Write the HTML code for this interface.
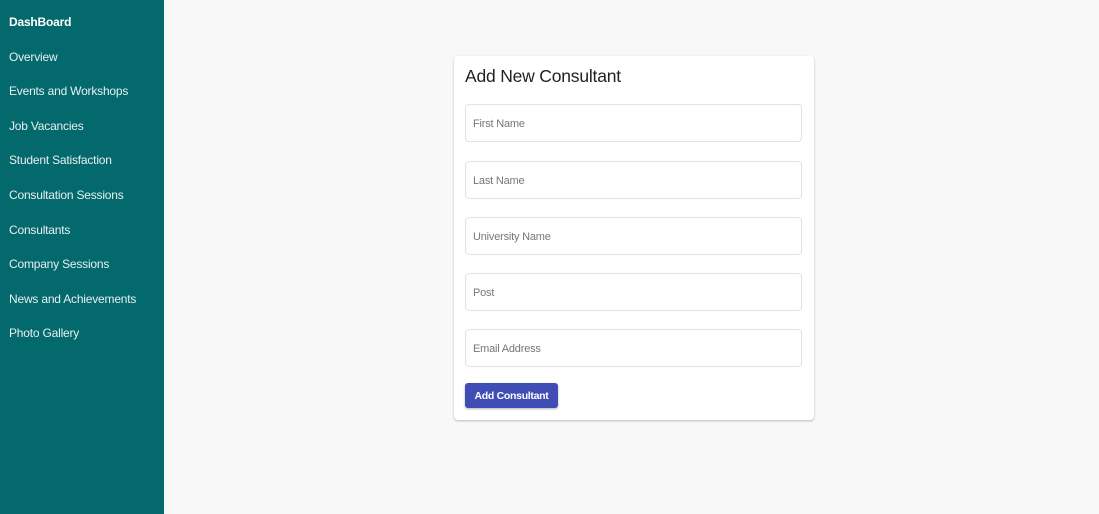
<!DOCTYPE html>
<html><head><style>
body{margin:0;width:1099px;height:514px;background:#f8f8f8;font-family:"Liberation Sans",sans-serif;position:relative;overflow:hidden}
.side{position:absolute;left:0;top:0;width:164px;height:514px;background:#04696c}
.side div{position:absolute;left:9px;color:#e6f0f0;font-size:12px;line-height:14px;letter-spacing:-0.2px}
.card{position:absolute;left:454px;top:56px;width:360px;height:364px;background:#fff;border-radius:4px;box-shadow:0 1px 2px rgba(0,0,0,.25)}
h1{position:absolute;left:11px;top:9px;margin:0;font-size:17.5px;font-weight:normal;color:#222;line-height:22px;letter-spacing:-0.2px}
.in{position:absolute;left:11px;width:335px;height:36px;border:1px solid #e2e2e2;border-radius:4px;font-size:11px;color:#777;line-height:38px;text-indent:7px;letter-spacing:-0.2px}
.btn{position:absolute;left:11px;top:327px;width:93px;height:25px;background:#3f4db5;border-radius:3px;color:#fff;font-size:10.5px;font-weight:bold;text-align:center;line-height:26px;letter-spacing:-0.3px;box-shadow:0 1px 2px rgba(0,0,0,.3)}
</style></head><body>
<div class="side">
<div style="top:15px;font-weight:bold;color:#fff">DashBoard</div>
<div style="top:50px">Overview</div>
<div style="top:84px">Events and Workshops</div>
<div style="top:119px">Job Vacancies</div>
<div style="top:153px">Student Satisfaction</div>
<div style="top:188px">Consultation Sessions</div>
<div style="top:223px">Consultants</div>
<div style="top:257px">Company Sessions</div>
<div style="top:292px">News and Achievements</div>
<div style="top:326px">Photo Gallery</div>
</div>
<div class="card">
<h1>Add New Consultant</h1>
<div class="in" style="top:48px">First Name</div>
<div class="in" style="top:105px">Last Name</div>
<div class="in" style="top:161px">University Name</div>
<div class="in" style="top:217px">Post</div>
<div class="in" style="top:273px">Email Address</div>
<div class="btn">Add Consultant</div>
</div>
</body></html>
